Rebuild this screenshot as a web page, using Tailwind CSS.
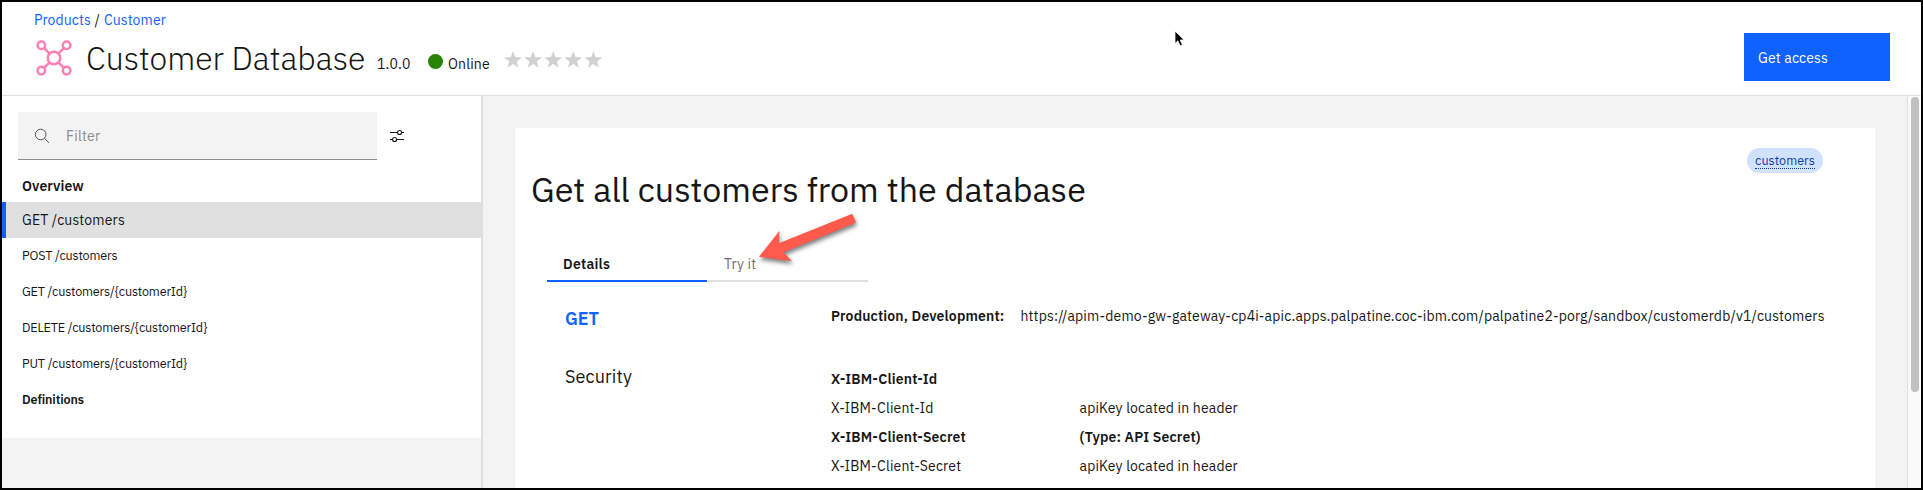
<!DOCTYPE html>
<html lang="en">
<head>
<meta charset="utf-8">
<title>Customer Database</title>
<script src="https://cdn.jsdelivr.net/npm/@tailwindcss/browser@4"></script>
</head>
<body class="bg-white">
<div class="relative flex h-[490px] w-[1923px] flex-col overflow-hidden border-2 border-black bg-white font-['IBM_Plex_Sans',Roboto,sans-serif] text-sm leading-5 font-normal tracking-[0.16px] whitespace-nowrap text-[#161616]">

  <header class="flex h-[94px] shrink-0 justify-between border-b border-[#e0e0e0] pr-[31px] pl-8">
    <div class="flex flex-col pt-2">
      <nav class="flex h-5">
        <a class="w-[65px] tracking-[0.1px] text-[#0f62fe]">Products</a>
        <span class="-ml-[4.5px] w-[9.5px]">/</span>
        <a class="tracking-[0.1px] text-[#0f62fe]">Customer</a>
      </nav>
      <div class="mt-2 flex h-10 items-start">
        <svg class="mt-0.5 ml-0.5 h-9 w-9 shrink-0" viewBox="0 0 36 36" fill="none" stroke="#ff7eb6" stroke-width="2.5">
          <circle cx="18" cy="18" r="6.3"/>
          <circle cx="5.3" cy="5.3" r="3.8"/><circle cx="30.6" cy="5.3" r="3.8"/>
          <circle cx="5.3" cy="30.6" r="3.8"/><circle cx="30.6" cy="30.6" r="3.8"/>
          <path d="M8 8l5.6 5.6M28 8l-5.6 5.6M8 28l5.6-5.6M28 28l-5.6-5.6"/>
        </svg>
        <h1 class="ml-[14px] w-[291px] text-[32px] leading-10 font-light tracking-normal">Customer Database</h1>
        <span class="mt-4 w-[51px]">1.0.0</span>
        <span class="mt-4 h-[15px] w-[15px] shrink-0 rounded-full bg-[#278400]"></span>
        <span class="mt-4 ml-[5px] w-[55.5px]">Online</span>
        <svg class="mt-[13px] h-[17px] w-[100px] shrink-0" viewBox="0 0 100 17" fill="#d1d1d1">
          <path id="star" d="M9 0l2.2 6.1 6.8.3-5.3 4 1.8 6.4L9 13.1l-5.5 3.7 1.8-6.4L0 6.4l6.8-.3z"/>
          <use href="#star" x="20.1"/><use href="#star" x="40.2"/><use href="#star" x="60.3"/><use href="#star" x="80.4"/>
        </svg>
      </div>
    </div>
    <button class="mt-[31px] flex h-12 w-[146px] items-center bg-[#0f62fe] pt-0.5 pl-3.5 text-white">Get access</button>
  </header>

  <div class="flex min-h-0 flex-1">
    <aside class="w-[481px] shrink-0 border-r-2 border-[#e0e0e0] bg-[#f3f3f3]">
      <div class="h-[342px] bg-white pt-4">
        <div class="flex items-center pl-4">
          <label class="flex h-12 w-[359px] items-center border-b border-[#8d8d8d] bg-[#f3f3f3] pl-4">
            <svg class="h-4 w-4" viewBox="0 0 16 16" fill="none" stroke="#525252"><circle cx="6.7" cy="6.5" r="5.3"/><path d="M10.4 10.3l4.6 4.6"/></svg>
            <span class="ml-4 tracking-[0.3px] text-[#8d8d8d]">Filter</span>
          </label>
          <svg class="ml-[13px] h-[14px] w-[14px]" viewBox="0 0 14 14" fill="none" stroke="#161616" stroke-width="1.1"><path d="M0 3.5h7.6M11.6 3.5H14M0 10.5h2.6M6.6 10.5H14"/><circle cx="9.6" cy="3.5" r="2"/><circle cx="4.6" cy="10.5" r="2"/></svg>
        </div>
        <div class="mt-4 pl-5 font-semibold tracking-[0.1px]">Overview</div>
        <ul class="mt-1.5 text-[12.6px] leading-[35px] tracking-[-0.18px]">
          <li class="h-9 border-l-4 border-[#0f62fe] bg-[#e0e0e0] pl-4 text-sm leading-9 tracking-[0.16px]">GET /customers</li>
          <li class="h-9 pl-5">POST /customers</li>
          <li class="h-9 pl-5">GET /customers/{customerId}</li>
          <li class="h-9 pl-5">DELETE /customers/{customerId}</li>
          <li class="h-9 pl-5">PUT /customers/{customerId}</li>
          <li class="h-9 pl-5 font-semibold tracking-[-0.15px]">Definitions</li>
        </ul>
      </div>
    </aside>

    <main class="min-w-0 flex-1 bg-[#f3f3f3] pt-8 pl-8">
      <section class="relative h-[360px] w-[1360px] bg-white pl-4">
        <h2 class="pt-[41px] text-[34px] leading-10 tracking-normal">Get all customers from the database</h2>
        <span class="absolute top-5 left-[1232px] flex h-[25px] w-19 items-center justify-center rounded-full bg-[#d0e2ff] text-[12.6px] tracking-[0.02px] text-[#0f3aa8]"><span class="border-b border-dotted border-[#0f3aa8] leading-[15px]">customers</span></span>

        <div class="mt-[35px] ml-4 flex gap-px">
          <div class="h-[38px] w-40 border-b-2 border-[#0f62fe] pt-[10px] pl-4 font-semibold tracking-[0.25px]">Details</div>
          <div class="h-[38px] w-40 border-b-2 border-[#e0e0e0] pt-[10px] pl-4 text-[#6f6f6f]">Try it</div>
        </div>

        <div class="mt-6 ml-[34px] grid grid-cols-[266px_auto]">
          <div class="pt-px text-lg leading-6 font-semibold tracking-normal text-[#0f62fe]">GET</div>
          <div class="flex gap-[17px]"><b class="w-[172.5px] font-semibold">Production, Development:</b><span class="tracking-[0.165px]">https://apim-demo-gw-gateway-cp4i-apic.apps.palpatine.coc-ibm.com/palpatine2-porg/sandbox/customerdb/v1/customers</span></div>
        </div>

        <div class="mt-[34px] ml-[34px] grid grid-cols-[266px_auto]">
          <div class="text-lg leading-6 tracking-[0.12px]">Security</div>
          <div class="grid grid-cols-[248.5px_auto] leading-[29px]">
            <b class="font-semibold">X-IBM-Client-Id</b><span></span>
            <span>X-IBM-Client-Id</span><span>apiKey located in header</span>
            <b class="font-semibold">X-IBM-Client-Secret</b><b class="font-semibold">(Type: API Secret)</b>
            <span>X-IBM-Client-Secret</span><span>apiKey located in header</span>
          </div>
        </div>
      </section>
    </main>

    <div class="w-[14px] shrink-0 border-l border-[#e0e0e0] bg-[#fafafa] pt-px pl-[3px]">
      <div class="h-[295px] w-2 rounded-full bg-[#c1c1c1]"></div>
    </div>
  </div>

  <!-- annotation arrow pointing at the "Try it" tab -->
  <svg class="absolute top-[203px] left-[748px] h-[70px] w-[120px] drop-shadow-[1px_3px_2px_rgba(0,0,0,0.5)]" viewBox="750 205 120 70"><path fill="#ff5a4b" d="M759 256.7L779.6 230.7L778.8 243.3L852.3 213.7L856 222.5L783.5 252.3L792 261.3z"/></svg>
  <!-- mouse pointer -->
  <svg class="absolute top-[28px] left-[1172px] h-[18px] w-[12px]" viewBox="0 0 12 18"><path d="M1 1v12.5l2.9-2.7 2.2 5 2.3-1-2.2-4.8h4z" fill="#000" stroke="#fff" stroke-width=".8"/></svg>
</div>
</body>
</html>
